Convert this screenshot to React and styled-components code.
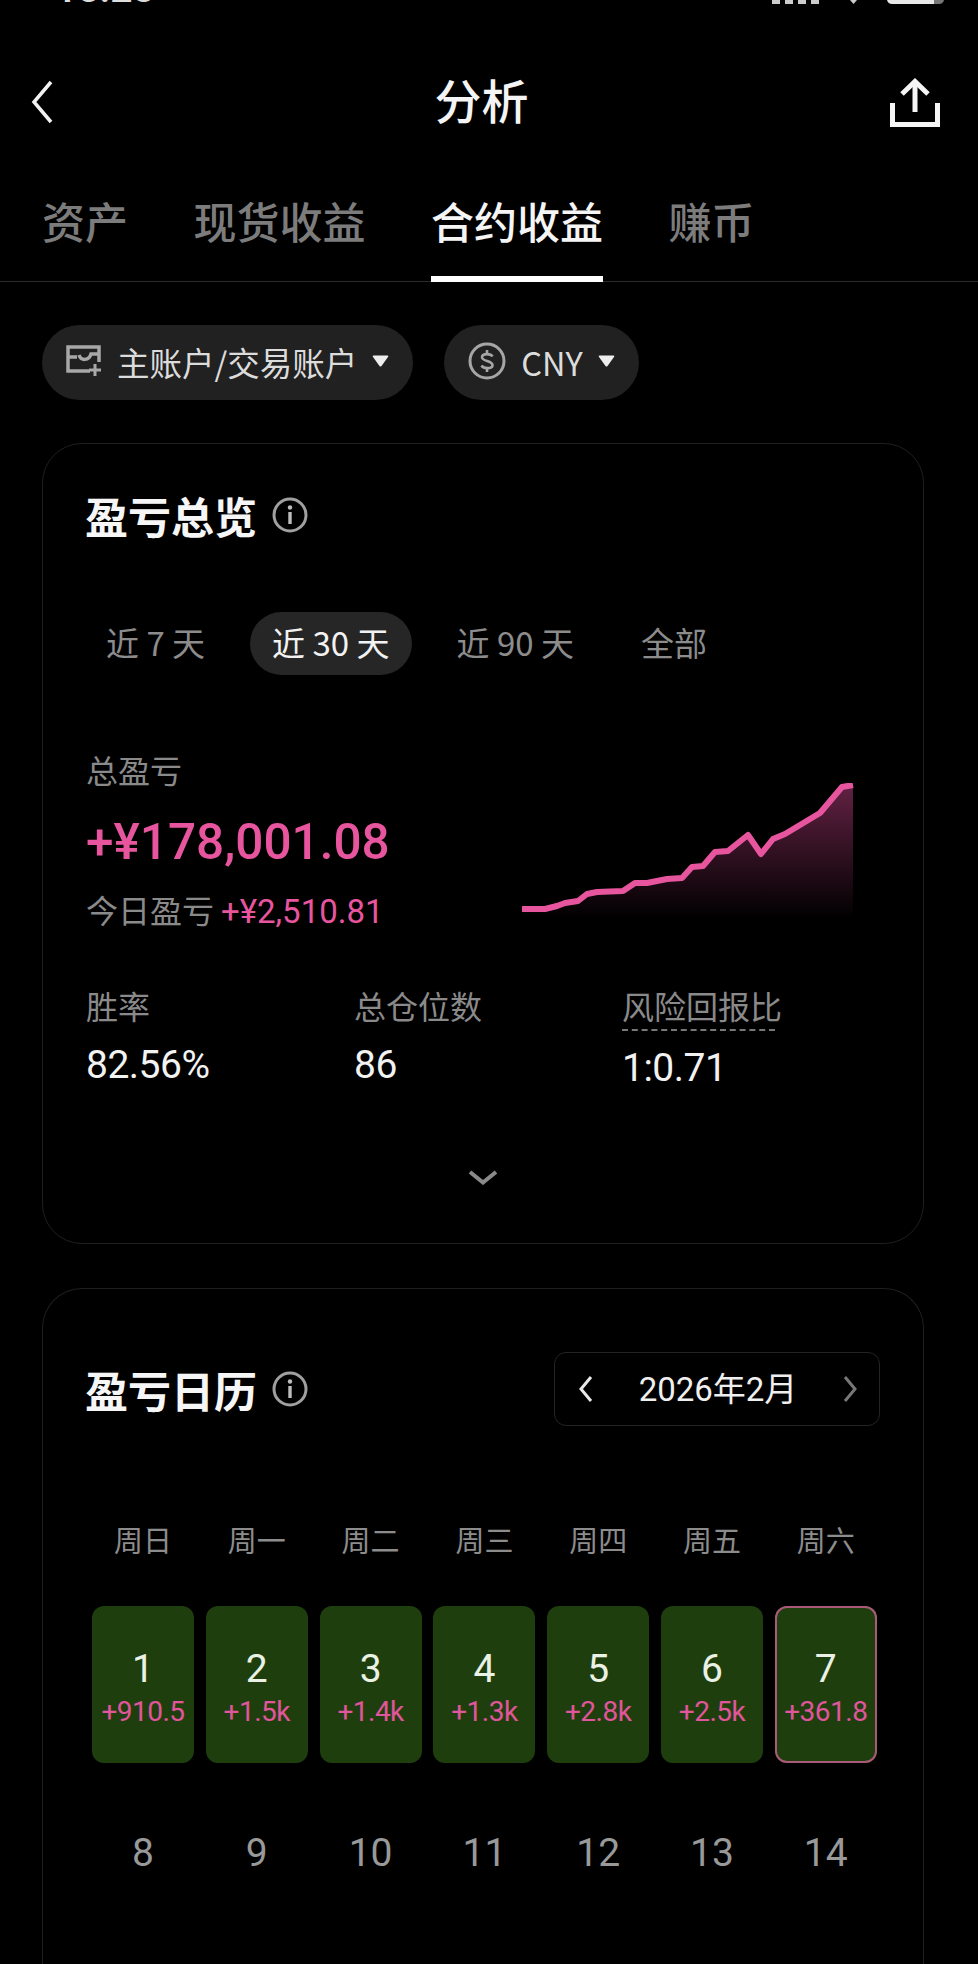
import React from "react";
import styled, { createGlobalStyle } from "styled-components";

const GlobalStyle = createGlobalStyle`
  html, body {
    margin: 0;
    padding: 0;
    background: #000;
  }
  body {
    font-family: "Noto Sans CJK SC", "Noto Sans", sans-serif;
    color: #fff;
  }
`;

const PINK = "#e8559f";
const NUM_FONT = `Roboto, "Noto Sans CJK SC", sans-serif`;

const Page = styled.div`
  width: 978px;
  height: 1964px;
  overflow: hidden;
  background: #000;
`;

const StatusBar = styled.div`
  height: 4px;
  padding: 0 34px 0 55px;
  display: flex;
  justify-content: space-between;
  align-items: flex-end;
  overflow: hidden;
`;

const StatusTime = styled.span`
  font: 600 39px/1 ${NUM_FONT};
  color: #ddd;
  margin-bottom: -5px;
`;

const StatusIcons = styled.svg`
  display: block;
`;

const TopBar = styled.header`
  height: 148px;
  margin-top: 24px;
  padding: 0 38px 0 31px;
  display: grid;
  grid-template-columns: 1fr auto 1fr;
  align-items: center;
`;

const TopBarEnd = styled.div`
  justify-self: end;
  display: flex;
`;

const Title = styled.h1`
  margin: 0 8px 8px 0;
  font-size: 47px;
  font-weight: 500;
  line-height: 1;
  color: #f4f4f4;
`;

const Tabs = styled.nav`
  height: 106px;
  box-sizing: border-box;
  padding: 0 42px;
  display: flex;
  gap: 65.5px;
  border-bottom: 1px solid #2b2b2b;
`;

const Tab = styled.div`
  height: 106px;
  box-sizing: border-box;
  padding-top: 14px;
  font-size: 43px;
  line-height: 60px;
  font-weight: 500;
  color: ${(p) => (p.$active ? "#f5f5f5" : "#7c7c7c")};
  border-bottom: ${(p) => (p.$active ? "6px solid #fff" : "none")};
`;

const Filters = styled.div`
  display: flex;
  gap: 31px;
  padding: 43px 42px 0;
`;

const Pill = styled.div`
  height: 75px;
  box-sizing: border-box;
  padding: 0 24px 3px;
  display: flex;
  align-items: center;
  gap: 15px;
  border-radius: 38px;
  background: #212121;
  font-size: 32.5px;
  color: #dcdcdc;
`;

const Caret = styled.svg`
  display: block;
  flex: none;
`;

const Card = styled.section`
  margin: ${(p) => p.$top}px 54px 0 42px;
  box-sizing: border-box;
  height: ${(p) => p.$height}px;
  padding: 0 43px;
  border: 1px solid #1f1f1f;
  border-bottom: ${(p) => (p.$open ? "none" : "1px solid #1f1f1f")};
  border-radius: ${(p) => (p.$open ? "40px 40px 0 0" : "40px")};
`;

const CardHead = styled.div`
  display: flex;
  align-items: center;
  justify-content: space-between;
  height: 74px;
  margin-top: ${(p) => p.$top}px;
`;

const CardTitleWrap = styled.div`
  display: flex;
  align-items: center;
  gap: 15px;
  margin-left: -1px;
`;

const CardTitle = styled.h2`
  margin: 0;
  font-size: 43px;
  font-weight: 700;
  line-height: 1;
  color: #f6f6f6;
`;

const Periods = styled.div`
  display: flex;
  gap: 23px;
  margin: 60px 0 0 -2px;
  height: 63px;
  align-items: center;
`;

const Period = styled.div`
  height: 63px;
  box-sizing: border-box;
  padding: 0 22px 4px;
  display: flex;
  align-items: center;
  border-radius: 32px;
  background: ${(p) => (p.$active ? "#262626" : "transparent")};
  color: ${(p) => (p.$active ? "#f2f2f2" : "#8c8c8c")};
  font-size: 33px;
  white-space: pre;
`;

const Summary = styled.div`
  display: flex;
  justify-content: space-between;
  margin-top: 75px;
`;

const SummaryLeft = styled.div`
  display: flex;
  flex-direction: column;
`;

const Label = styled.div`
  font-size: 32px;
  line-height: 38px;
  padding-bottom: 6px;
  color: #8a8a8a;
  white-space: nowrap;
`;

const Amount = styled.div`
  margin-top: 20px;
  font: 500 49.5px/56px ${NUM_FONT};
  color: ${PINK};
`;

const TodayRow = styled.div`
  margin-top: 20px;
  display: flex;
  gap: 7px;
  align-items: center;
`;

const TodayValue = styled.span`
  font: 400 33px/44px ${NUM_FONT};
  color: ${PINK};
`;

const Chart = styled.svg`
  display: block;
  flex: none;
  margin: 33px 24px 0 0;
`;

const Stats = styled.div`
  display: grid;
  grid-template-columns: 268px 268px 1fr;
  margin-top: 52px;
`;

const Stat = styled.div`
  display: flex;
  flex-direction: column;
`;

const DashedLabel = styled(Label)`
  width: 153px;
  height: 45px;
  box-sizing: border-box;
  border-bottom: 2px dashed #777;
`;

const StatValue = styled.div`
  margin-top: ${(p) => p.$top}px;
  font: 400 39px/50px ${NUM_FONT};
  letter-spacing: -0.5px;
  color: #f2f2f2;
`;

const MoreRow = styled.div`
  display: flex;
  justify-content: center;
  margin-top: 77px;
`;

const MonthPicker = styled.div`
  width: 326px;
  height: 74px;
  box-sizing: border-box;
  padding: 0 20px 0 22px;
  display: flex;
  align-items: center;
  justify-content: space-between;
  border: 1px solid #242424;
  border-radius: 12px;
  font: 400 33px/1 ${NUM_FONT};
  color: #efefef;
`;

const WeekRow = styled.div`
  display: grid;
  grid-template-columns: repeat(7, 102px);
  column-gap: 11.8px;
  margin: 95px 0 0 6px;
`;

const WeekDay = styled.div`
  text-align: center;
  font-size: 29px;
  line-height: 36px;
  padding-bottom: 4px;
  color: #8c8c8c;
`;

const DayGrid = styled.div`
  display: grid;
  grid-template-columns: repeat(7, 102px);
  column-gap: 11.8px;
  margin: 45px 0 0 6px;
`;

const DayCell = styled.div`
  height: ${(p) => (p.$filled ? 157 : 180)}px;
  box-sizing: border-box;
  display: flex;
  flex-direction: column;
  align-items: center;
  justify-content: ${(p) => (p.$filled ? "flex-start" : "center")};
  padding-top: ${(p) => (p.$filled ? 42 : 0)}px;
  border-radius: 12px;
  background: ${(p) => (p.$filled ? "#1f3e0e" : "transparent")};
  box-shadow: ${(p) => (p.$today ? "inset 0 0 0 2px #a85a78" : "none")};
`;

const DayNum = styled.div`
  font: 400 39px/42px ${NUM_FONT};
  color: ${(p) => (p.$filled ? "#e9f2e4" : "#999")};
`;

const DayPnl = styled.div`
  margin-top: 6px;
  font: 400 28px/32px ${NUM_FONT};
  letter-spacing: -0.5px;
  color: #e0559b;
`;

const BackIcon = () => (
  <svg width="22" height="44" viewBox="0 0 22 44" fill="none" stroke="#f2f2f2" strokeWidth="3.5">
    <path d="M20 2 L3 22 L20 42" />
  </svg>
);

const ShareIcon = () => (
  <svg width="50" height="49" viewBox="0 0 50 49" fill="none" stroke="#f5f5f5" strokeWidth="5">
    <path d="M2.5 25 V46.5 H47.5 V25" />
    <path d="M25 34 V4" />
    <path d="M12 16 L25 3.5 L38 16" />
  </svg>
);

const WalletIcon = () => (
  <svg width="36" height="32" viewBox="0 0 36 32" fill="none" stroke="#a8a8a8" strokeWidth="3.5">
    <path d="M24 26 H2 V2 H33 V17" />
    <path d="M2 12 H11" />
    <path d="M13 10 C15 16 23 16 25 9 H33" />
    <path d="M29 19 V31 M23 25 H35" strokeWidth="3" />
  </svg>
);

const CoinIcon = () => (
  <svg width="38" height="38" viewBox="0 0 38 38" fill="none" stroke="#a6a6a6">
    <circle cx="19" cy="19" r="17" strokeWidth="3" />
    <path d="M24.5 14.5 C23 11.5 14.5 11 14 15 C13.5 20 25 18 24.5 23.5 C24 27 15.5 27 13.5 23.5" strokeWidth="2.6" />
    <path d="M19 8 V11.5 M19 26.5 V30" strokeWidth="2.6" />
  </svg>
);

const PillCaret = () => (
  <Caret width="17" height="12" viewBox="0 0 17 12" fill="#eee">
    <path d="M1.5 0.5 H15.5 Q17 0.5 16 2 L9.5 11 Q8.5 12 7.5 11 L1 2 Q0 0.5 1.5 0.5 Z" />
  </Caret>
);

const InfoIcon = () => (
  <svg width="36" height="36" viewBox="0 0 36 36" fill="none">
    <circle cx="18" cy="18" r="16" stroke="#a0a0a0" strokeWidth="3" />
    <circle cx="18" cy="10.5" r="2.2" fill="#bdbdbd" />
    <path d="M18 15 V27" stroke="#bdbdbd" strokeWidth="3.4" />
  </svg>
);

const ExpandIcon = () => (
  <svg width="30" height="15" viewBox="0 0 30 15" fill="none" stroke="#8a8a8a" strokeWidth="4">
    <path d="M2 2 L15 12.5 L28 2" />
  </svg>
);

const MonthArrow = ({ dir, color }) => (
  <svg width="18" height="30" viewBox="0 0 18 30" fill="none" stroke={color} strokeWidth="3">
    <path d={dir === "left" ? "M14 3 L4 15 L14 27" : "M4 3 L14 15 L4 27"} />
  </svg>
);

// 曲线的点，按参考图量出来的
const curve = [
  [2, 116], [25, 116], [37, 113], [45, 110], [58, 108], [67, 101], [77, 99], [103, 98],
  [115, 90], [127, 90], [147, 86], [162, 85], [172, 74], [183, 73], [195, 59], [208, 58],
  [228, 42], [241, 61], [253, 46], [265, 41], [300, 20], [322, -6], [333, -8],
].map(([x, y]) => [x, y + 10]);

const linePath = curve.map((pt, i) => `${i === 0 ? "M" : "L"}${pt[0]} ${pt[1]}`).join(" ");
const areaPath = `${linePath} L333 136 L2 136 Z`;

const PnlChart = () => (
  <Chart width="336" height="136" viewBox="0 0 336 136">
    <defs>
      <linearGradient id="pnlFill" x1="0" y1="0" x2="0" y2="1">
        <stop offset="0" stopColor="#ea4f9f" stopOpacity="0.42" />
        <stop offset="1" stopColor="#ea4f9f" stopOpacity="0" />
      </linearGradient>
    </defs>
    <path d={areaPath} fill="url(#pnlFill)" />
    <path d={linePath} fill="none" stroke={PINK} strokeWidth="6" strokeLinejoin="round" />
  </Chart>
);

const tabs = ["资产", "现货收益", "合约收益", "赚币"];
const periods = [
  { text: "近 7 天" },
  { text: "近 30 天", active: true },
  { text: "近 90 天" },
  { text: "全部" },
];
const weekDays = ["周日", "周一", "周二", "周三", "周四", "周五", "周六"];
const days = [
  { n: 1, pnl: "+910.5" },
  { n: 2, pnl: "+1.5k" },
  { n: 3, pnl: "+1.4k" },
  { n: 4, pnl: "+1.3k" },
  { n: 5, pnl: "+2.8k" },
  { n: 6, pnl: "+2.5k" },
  { n: 7, pnl: "+361.8", today: true },
  { n: 8 }, { n: 9 }, { n: 10 }, { n: 11 }, { n: 12 }, { n: 13 }, { n: 14 },
];

const App = () => {
  return (
    <Page>
      <GlobalStyle />
      <StatusBar>
        <StatusTime>15:28</StatusTime>
        <StatusIcons width="172" height="4" viewBox="0 0 172 4">
          <rect x="0" y="0" width="8" height="4" fill="#ccc" />
          <rect x="13" y="0" width="8" height="4" fill="#ccc" />
          <rect x="26" y="0" width="8" height="4" fill="#ccc" />
          <rect x="39" y="0" width="8" height="4" fill="#ccc" />
          <path d="M78 0 H85 L81.5 4 Z" fill="#ccc" />
          <path d="M115 0 H162 V4 H120 Q116 4 115 0 Z" fill="#e8e8e8" />
          <path d="M162 0 H172 Q171 4 167 4 H162 Z" fill="#777" />
        </StatusIcons>
      </StatusBar>

      <TopBar>
        <BackIcon />
        <Title>分析</Title>
        <TopBarEnd>
          <ShareIcon />
        </TopBarEnd>
      </TopBar>

      <Tabs>
        {tabs.map((t) => (
          <Tab key={t} $active={t === "合约收益"}>{t}</Tab>
        ))}
      </Tabs>

      <Filters>
        <Pill>
          <WalletIcon />
          主账户/交易账户
          <PillCaret />
        </Pill>
        <Pill>
          <CoinIcon />
          CNY
          <PillCaret />
        </Pill>
      </Filters>

      <Card $top={43} $height={801}>
        <CardHead $top={34}>
          <CardTitleWrap>
            <CardTitle>盈亏总览</CardTitle>
            <InfoIcon />
          </CardTitleWrap>
        </CardHead>

        <Periods>
          {periods.map((p) => (
            <Period key={p.text} $active={p.active}>{p.text}</Period>
          ))}
        </Periods>

        <Summary>
          <SummaryLeft>
            <Label>总盈亏</Label>
            <Amount>+¥178,001.08</Amount>
            <TodayRow>
              <Label>今日盈亏</Label>
              <TodayValue>+¥2,510.81</TodayValue>
            </TodayRow>
          </SummaryLeft>
          <PnlChart />
        </Summary>

        <Stats>
          <Stat>
            <Label>胜率</Label>
            <StatValue $top={10}>82.56%</StatValue>
          </Stat>
          <Stat>
            <Label>总仓位数</Label>
            <StatValue $top={10}>86</StatValue>
          </Stat>
          <Stat>
            <DashedLabel>风险回报比</DashedLabel>
            <StatValue $top={12}>1:0.71</StatValue>
          </Stat>
        </Stats>

        <MoreRow>
          <ExpandIcon />
        </MoreRow>
      </Card>

      <Card $top={44} $height={700} $open>
        <CardHead $top={63}>
          <CardTitleWrap>
            <CardTitle>盈亏日历</CardTitle>
            <InfoIcon />
          </CardTitleWrap>
          <MonthPicker>
            <MonthArrow dir="left" color="#e8e8e8" />
            2026年2月
            <MonthArrow dir="right" color="#777" />
          </MonthPicker>
        </CardHead>

        <WeekRow>
          {weekDays.map((d) => (
            <WeekDay key={d}>{d}</WeekDay>
          ))}
        </WeekRow>

        <DayGrid>
          {days.map((d) => (
            <DayCell key={d.n} $filled={!!d.pnl} $today={d.today}>
              <DayNum $filled={!!d.pnl}>{d.n}</DayNum>
              {d.pnl && <DayPnl>{d.pnl}</DayPnl>}
            </DayCell>
          ))}
        </DayGrid>
      </Card>
    </Page>
  );
};

export default App;
